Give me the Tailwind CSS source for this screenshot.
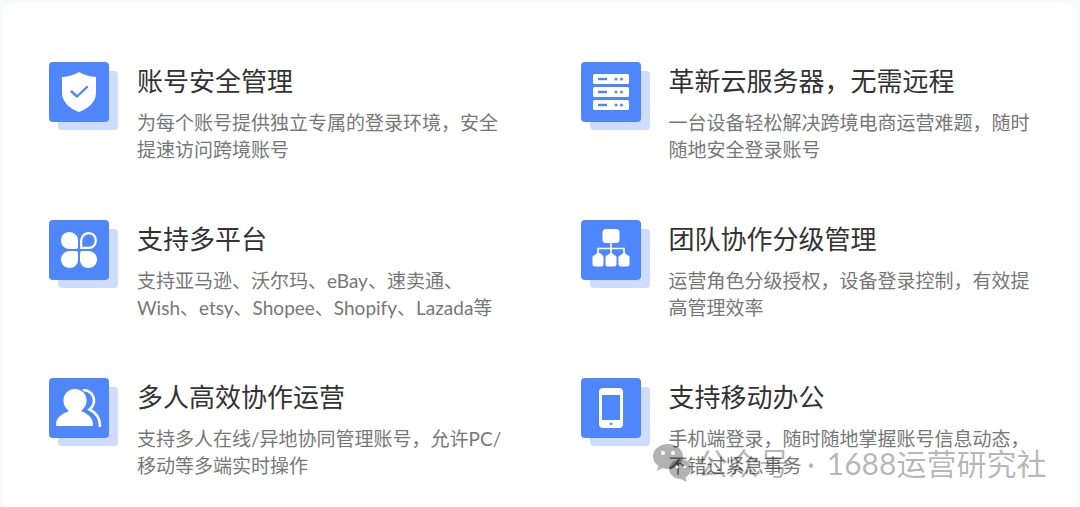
<!DOCTYPE html>
<html lang="zh-CN">
<head>
  <meta charset="UTF-8">
  <title>功能介绍</title>
  <script src="https://cdn.jsdelivr.net/npm/@tailwindcss/browser@4"></script>
</head>
<body class="w-[1080px] h-[507px] overflow-hidden bg-[#f8f9fd] font-['Lato','Noto_Sans_CJK_SC',sans-serif]">
<div class="relative h-[504px] overflow-hidden ml-[2px] mr-[3px] mt-[3px] rounded-t-xl bg-white pl-[47px] pt-[59px]">
  <div class="grid grid-cols-[531.500px_1fr] grid-rows-[158px_158px_126px]">

    <!-- row 1 -->
    <div class="flex">
      <div class="relative w-[60px] h-[60px] mr-[28px] shrink-0">
        <div class="absolute left-[9px] top-[9px] w-[60px] h-[59px] rounded bg-[#cfdcff]"></div>
        <div class="relative w-[60px] h-[60px] rounded bg-[#5086fc] flex items-center justify-center">
          <svg width="36" height="40" viewBox="0 0 36 40">
            <path d="M18 0 C23 3 29 4.500 35 5 V21 C35 31 26 37 18 40 C10 37 1 31 1 21 V5 C7 4.500 13 3 18 0Z" fill="#fff"/>
            <path d="M10.500 19.500 L16 24.500 L26 15" fill="none" stroke="#5086fc" stroke-width="2.400" stroke-linecap="round" stroke-linejoin="round"/>
          </svg>
        </div>
      </div>
      <div>
        <h2 class="text-[26px] leading-[38px] text-[#333]">账号安全管理</h2>
        <p class="w-[372px] text-[19px] leading-[27px] text-[#777] mt-[9px]">为每个账号提供独立专属的登录环境，安全提速访问跨境账号</p>
      </div>
    </div>
    <div class="flex">
      <div class="relative w-[60px] h-[60px] mr-[28px] shrink-0">
        <div class="absolute left-[9px] top-[9px] w-[60px] h-[59px] rounded bg-[#cfdcff]"></div>
        <div class="relative w-[60px] h-[60px] rounded bg-[#5086fc] flex items-center justify-center">
          <svg width="36" height="36" viewBox="0 0 36 36">
            <rect y="0" width="36" height="10" rx="1.500" fill="#fff"/>
            <rect y="13" width="36" height="10" rx="1.500" fill="#fff"/>
            <rect y="26" width="36" height="10" rx="1.500" fill="#fff"/>
            <g fill="#5086fc">
              <rect x="5" y="3.800" width="9" height="2.400"/><circle cx="23" cy="5" r="1.500"/><circle cx="28.500" cy="5" r="1.500"/>
              <rect x="5" y="16.800" width="9" height="2.400"/><circle cx="23" cy="18" r="1.500"/><circle cx="28.500" cy="18" r="1.500"/>
              <rect x="5" y="29.800" width="9" height="2.400"/><circle cx="23" cy="31" r="1.500"/><circle cx="28.500" cy="31" r="1.500"/>
            </g>
          </svg>
        </div>
      </div>
      <div>
        <h2 class="text-[26px] leading-[38px] text-[#333]">革新云服务器，无需远程</h2>
        <p class="w-[372px] text-[19px] leading-[27px] text-[#777] mt-[9px]">一台设备轻松解决跨境电商运营难题，随时随地安全登录账号</p>
      </div>
    </div>

    <!-- row 2 -->
    <div class="flex">
      <div class="relative w-[60px] h-[60px] mr-[28px] shrink-0">
        <div class="absolute left-[9px] top-[9px] w-[60px] h-[59px] rounded bg-[#cfdcff]"></div>
        <div class="relative w-[60px] h-[60px] rounded bg-[#5086fc] flex items-center justify-center">
          <svg width="36" height="36" viewBox="0 0 36 36" fill="#fff">
            <path d="M8 0 C12.500 0 17 3.500 17 8 V15 Q17 17 15 17 H8 C3.500 17 0 13 0 8.500 C0 3.500 3.500 0 8 0Z"/>
            <path d="M8 19 H15 Q17 19 17 21 V28 C17 32.500 13 36 8.500 36 C3.500 36 0 32 0 27.500 C0 23 3.500 19 8 19Z"/>
            <path d="M21 19 H28 C32.500 19 36 23 36 27.500 C36 32 32.500 36 27.500 36 C23 36 19 32.500 19 28 V21 Q19 19 21 19Z"/>
            <path d="M28 1.200 C32 1.200 34.800 4.500 34.800 8.500 C34.800 12.500 32 15.800 28 15.800 H20.200 V8.500 C20.200 4.500 23.500 1.200 28 1.200Z" fill="none" stroke="#fff" stroke-width="2.200"/>
          </svg>
        </div>
      </div>
      <div>
        <h2 class="text-[26px] leading-[38px] text-[#333]">支持多平台</h2>
        <p class="w-[372px] text-[19px] leading-[27px] text-[#777] mt-[9px]">支持亚马逊、沃尔玛、eBay、速卖通、Wish、etsy、Shopee、Shopify、Lazada等</p>
      </div>
    </div>
    <div class="flex">
      <div class="relative w-[60px] h-[60px] mr-[28px] shrink-0">
        <div class="absolute left-[9px] top-[9px] w-[60px] h-[59px] rounded bg-[#cfdcff]"></div>
        <div class="relative w-[60px] h-[60px] rounded bg-[#5086fc] flex items-center justify-center">
          <svg width="38" height="38" viewBox="0 0 38 38" fill="#fff" class="mb-[4px]">
            <rect x="10.500" y="0" width="17" height="14" rx="3.500"/>
            <path d="M19 14 V26 M6 26 V19.500 H32 V26" fill="none" stroke="#fff" stroke-width="1.600"/>
            <path d="M3 26 L5 24 H8 L10 26 Q11.500 26.500 11.500 28 V35 Q11.500 37.500 9 37.500 H3 Q0.500 37.500 0.500 35 V28 Q0.500 26.500 3 26Z"/>
            <path d="M16 26 L18 24 H20 L22 26 Q24.500 26.500 24.500 28 V35 Q24.500 37.500 22 37.500 H16 Q13.500 37.500 13.500 35 V28 Q13.500 26.500 16 26Z"/>
            <path d="M29 26 L31 24 H33 L35 26 Q37.500 26.500 37.500 28 V35 Q37.500 37.500 35 37.500 H29 Q26.500 37.500 26.500 35 V28 Q26.500 26.500 29 26Z"/>
          </svg>
        </div>
      </div>
      <div>
        <h2 class="text-[26px] leading-[38px] text-[#333]">团队协作分级管理</h2>
        <p class="w-[372px] text-[19px] leading-[27px] text-[#777] mt-[9px]">运营角色分级授权，设备登录控制，有效提高管理效率</p>
      </div>
    </div>

    <!-- row 3 -->
    <div class="flex">
      <div class="relative w-[60px] h-[60px] mr-[28px] shrink-0">
        <div class="absolute left-[9px] top-[9px] w-[60px] h-[59px] rounded bg-[#cfdcff]"></div>
        <div class="relative w-[60px] h-[60px] rounded bg-[#5086fc] flex items-center justify-center">
          <svg width="46" height="38" viewBox="0 0 46 38">
            <path d="M0 36 C0 28 6 25 13 22 C9 19 7.500 15 7.500 11 C7.500 4.500 13 0 19 0 C26 0 30.500 5 30.500 11 C30.500 15 29 19 25 22 C31 24.500 37 28 37 36 Q37 37 36 37 H1 Q0 37 0 36Z" fill="#fff"/>
            <path d="M28 1 C34 1.500 38 6 38 11.500 C38 15 36 18.500 33.500 20.500 C39 23 44 28 44 37" fill="none" stroke="#fff" stroke-width="2.600" stroke-linecap="round"/>
          </svg>
        </div>
      </div>
      <div>
        <h2 class="text-[26px] leading-[38px] text-[#333]">多人高效协作运营</h2>
        <p class="w-[372px] text-[19px] leading-[27px] text-[#777] mt-[9px]">支持多人在线/异地协同管理账号，允许PC/移动等多端实时操作</p>
      </div>
    </div>
    <div class="flex">
      <div class="relative w-[60px] h-[60px] mr-[28px] shrink-0">
        <div class="absolute left-[9px] top-[9px] w-[60px] h-[59px] rounded bg-[#cfdcff]"></div>
        <div class="relative w-[60px] h-[60px] rounded bg-[#5086fc] flex items-center justify-center">
          <svg width="24" height="40" viewBox="0 0 24 40">
            <rect width="24" height="40" rx="4" fill="#fff"/>
            <rect x="3" y="7" width="18" height="25" fill="#5086fc"/>
            <circle cx="12" cy="35.800" r="1.400" fill="#5086fc"/>
          </svg>
        </div>
      </div>
      <div>
        <h2 class="text-[26px] leading-[38px] text-[#333]">支持移动办公</h2>
        <p class="w-[372px] text-[19px] leading-[27px] text-[#777] mt-[9px]">手机端登录，随时随地掌握账号信息动态，不错过紧急事务</p>
      </div>
    </div>
  </div>

  <!-- watermark -->
  <div class="absolute left-[651px] top-[440px] flex items-center text-[#000]/30 text-[30px] leading-[40px] whitespace-nowrap">
    <svg width="40" height="40" viewBox="0 0 40 40" class="mr-[4px]">
      <path d="M15 1 C6.500 1 0 6.500 0 13.500 C0 17.500 2.200 20.800 5.500 23 L4 28 L9.500 25 C11.500 25.700 13.200 26 15.500 26 C23.500 26 30 20.500 30 13.500 C30 6.500 23.500 1 15 1Z" fill="#000" fill-opacity="0.3"/>
      <path d="M28 16 C21.500 16 16 20.500 16 26 C16 31.500 21.500 36 28 36 L33.500 39 L32.500 34.500 C35.500 32.500 38 29.500 38 26 C38 20.500 34.500 16 28 16Z" fill="#000" fill-opacity="0.3"/>
      <circle cx="10" cy="10" r="2" fill="#fff"/><circle cx="20" cy="10" r="2" fill="#fff"/>
      <circle cx="24" cy="24" r="1.600" fill="#fff"/><circle cx="32" cy="24" r="1.600" fill="#fff"/>
    </svg>
    <span class="text-[31px]">公众号</span>
    <span class="ml-[17px]">·</span>
    <span class="ml-[12px]">1688运营研究社</span>
  </div>
</div>
</body>
</html>
